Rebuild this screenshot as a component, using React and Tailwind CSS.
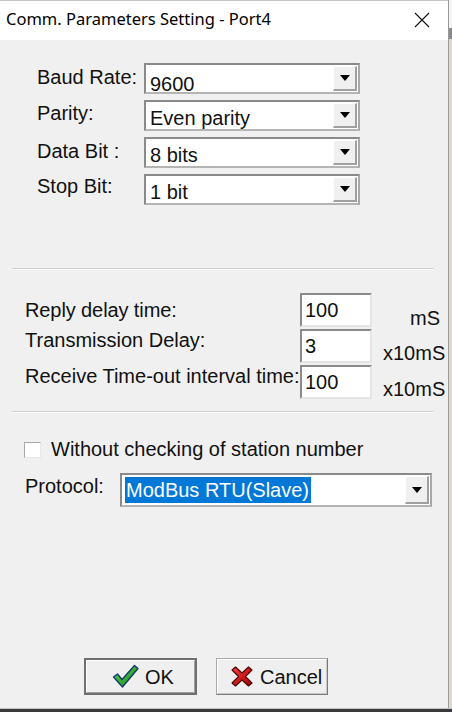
import React from "react";

const F = { fontFamily: '"Liberation Sans", Arial, sans-serif' };

function Arrow() {
  return (
    <svg width="10" height="6" viewBox="0 0 10 6">
      <polygon points="0,0 10,0 5,6" fill="#000" />
    </svg>
  );
}

function Combo({ value, w, h, selected, tp = "pt-[3px]" }) {
  return (
    <div
      className={`flex items-stretch bg-white border-2 border-t-[#8a8a8a] border-l-[#8a8a8a] border-b-[#b4b4b4] border-r-[#a8a8a8] ${w} ${h}`}
    >
      <div className="flex-1 flex items-center pl-[3px] pr-[2px] py-[2px]">
        {selected ? (
          <span className="bg-[#0078d7] text-white h-full flex items-center pr-[2px] pl-[1px] text-[20px] leading-[20px]">
            {value}
          </span>
        ) : (
          <span className={`text-[#111] text-[20px] leading-[20px] pl-[1px] ${tp}`}>{value}</span>
        )}
      </div>
      <div className="w-[24px] my-[1px] mr-[1px] bg-[#f0f0f0] border-l border-t border-l-white border-t-white border-r-2 border-b-2 border-r-[#a0a0a0] border-b-[#a0a0a0] flex items-center justify-center">
        <Arrow />
      </div>
    </div>
  );
}

function TextBox({ value }) {
  return (
    <div className="w-[72px] h-[34px] bg-white border-t-2 border-l-2 border-t-[#8a8a8a] border-l-[#8a8a8a] border-b-2 border-r-2 border-b-[#e4e4e4] border-r-[#e4e4e4] flex items-start pl-[3px] pt-[5px]">
      <span className="text-[20px] leading-[20px] text-[#111]">{value}</span>
    </div>
  );
}

function CheckIcon() {
  return (
    <svg width="27" height="25" viewBox="0 0 27 25">
      <defs>
        <linearGradient id="gchk" x1="0" y1="0" x2="1" y2="1">
          <stop offset="0" stopColor="#5fd35f" />
          <stop offset="1" stopColor="#0c8a0c" />
        </linearGradient>
      </defs>
      <polygon
        points="1.5,13 5.5,10 10,15.5 22.5,1.5 26,4.5 10.5,23"
        fill="url(#gchk)"
        stroke="#15356e"
        strokeWidth="1.3"
        strokeLinejoin="round"
      />
    </svg>
  );
}

function XIcon() {
  return (
    <svg width="22" height="21" viewBox="0 0 22 21">
      <defs>
        <linearGradient id="gx" x1="0" y1="0" x2="1" y2="1">
          <stop offset="0" stopColor="#ff3b3b" />
          <stop offset="1" stopColor="#a00000" />
        </linearGradient>
      </defs>
      <polygon
        points="1,4 4.5,1 11,7 17.5,1 21,4 14.5,10.5 21,17 17.5,20 11,14 4.5,20 1,17 7.5,10.5"
        fill="url(#gx)"
        stroke="#4a0000"
        strokeWidth="1.1"
        strokeLinejoin="round"
      />
    </svg>
  );
}

export default function App() {
  return (
    <div className="w-[452px] h-[712px] flex flex-col bg-[#3a3a3a] overflow-hidden" style={F}>
      <div className="flex flex-1 min-h-0">
        {/* window */}
        <div className="w-[448px] flex flex-col">
          {/* title bar */}
          <div className="h-[40px] bg-white border-t border-t-[#c4c4c4] flex items-center justify-between pl-[6px] pr-[18px]">
            <span
              className="text-[16.5px] text-black pb-[2px]"
              style={{ fontFamily: '"Noto Sans", "Open Sans", sans-serif' }}
            >
              Comm. Parameters Setting - Port4
            </span>
            <svg width="16" height="16" viewBox="0 0 16 16" className="mb-[1px]">
              <path d="M1 1 L15 15 M15 1 L1 15" stroke="#111" strokeWidth="1.1" />
            </svg>
          </div>

          {/* body */}
          <div className="flex-1 bg-[#f0f0f0] flex flex-col text-[20px] leading-[20px] text-[#111]">
            {/* combos */}
            <div className="mt-[23px] flex flex-col gap-[6px] pl-[37px]">
              <div className="flex items-start">
                <span className="w-[107px] pt-[4px]">Baud Rate:</span>
                <Combo value="9600" w="w-[216px]" h="h-[31px]" tp="pt-[10px]" />
              </div>
              <div className="flex items-start">
                <span className="w-[107px] pt-[3px]">Parity:</span>
                <Combo value="Even parity" w="w-[216px]" h="h-[31px]" tp="pt-[5px]" />
              </div>
              <div className="flex items-start">
                <span className="w-[107px] pt-[4px]">Data Bit :</span>
                <Combo value="8 bits" w="w-[216px]" h="h-[31px]" tp="pt-[5px]" />
              </div>
              <div className="flex items-start">
                <span className="w-[107px] pt-[2px]">Stop Bit:</span>
                <Combo value="1 bit" w="w-[216px]" h="h-[31px]" tp="pt-[5px]" />
              </div>
            </div>

            {/* separator */}
            <div className="mt-[63px] ml-[12px] w-[422px] h-[2px] border-t border-t-[#d0d0d0] border-b border-b-white" />

            {/* delays */}
            <div className="mt-[23px] flex flex-col gap-[2px] pl-[25px]">
              <div className="flex items-start h-[34px]">
                <span className="w-[275px] pt-[7px] tracking-[-0.1px]">Reply delay time:</span>
                <TextBox value="100" />
                <span className="ml-[38px] pt-[15px]">mS</span>
              </div>
              <div className="flex items-start h-[34px]">
                <span className="w-[275px] pt-[1px]">Transmission Delay:</span>
                <TextBox value="3" />
                <span className="ml-[11px] pt-[14px]">x10mS</span>
              </div>
              <div className="flex items-start h-[34px]">
                <span className="w-[275px] pt-[1px] whitespace-nowrap">Receive Time-out interval time:</span>
                <TextBox value="100" />
                <span className="ml-[11px] pt-[14px]">x10mS</span>
              </div>
            </div>

            {/* separator 2 */}
            <div className="mt-[12px] ml-[12px] w-[422px] h-[2px] border-t border-t-[#d0d0d0] border-b border-b-white" />

            {/* checkbox */}
            <div className="mt-[26px] pl-[24px] flex items-center">
              <div className="w-[17px] h-[16px] bg-white border border-[#a8a8a8] border-b-[#e8e8e8] border-r-[#e8e8e8]" />
              <span className="ml-[10px] pb-[1px]">Without checking of station number</span>
            </div>

            {/* protocol */}
            <div className="mt-[13px] pl-[25px] flex items-start">
              <span className="w-[95px] pt-[3px]">Protocol:</span>
              <Combo value="ModBus RTU(Slave)" w="w-[312px]" h="h-[34px]" selected />
            </div>

            <div className="flex-1" />

            {/* buttons */}
            <div className="mb-[13px] pl-[84px] flex gap-[19px]">
              <button className="w-[113px] h-[37px] bg-[#efefef] border-2 border-[#6f6f6f] flex items-center justify-center">
                <div className="w-full h-full border border-white border-b-[#a0a0a0] border-r-[#a0a0a0] flex items-center pl-[25px]">
                  <CheckIcon />
                  <span className="ml-[6px] text-[20px]">OK</span>
                </div>
              </button>
              <button className="w-[112px] h-[37px] bg-[#efefef] border border-[#a8a8a8] border-b-[#7a7a7a] border-r-[#7a7a7a] flex items-center justify-center">
                <div className="w-full h-full border border-white border-b-[#c8c8c8] border-r-[#c8c8c8] flex items-center pl-[13px]">
                  <XIcon />
                  <span className="ml-[7px] text-[20px]">Cancel</span>
                </div>
              </button>
            </div>
          </div>
        </div>
        {/* right strip (background behind window) */}
        <div className="w-[4px] flex flex-col bg-[#dcdcc8] border-l border-l-[#9a9a9a]">
          <div className="h-[28px] bg-[#f4f4f4]" />
          <div className="h-[11px] bg-[#8c8c8c]" />
          <div className="flex-1" />
        </div>
      </div>
      <div className="h-[1px] bg-[#c4c4c4]" />
      <div className="h-[3px] bg-[#3a3a3a]" />
    </div>
  );
}
